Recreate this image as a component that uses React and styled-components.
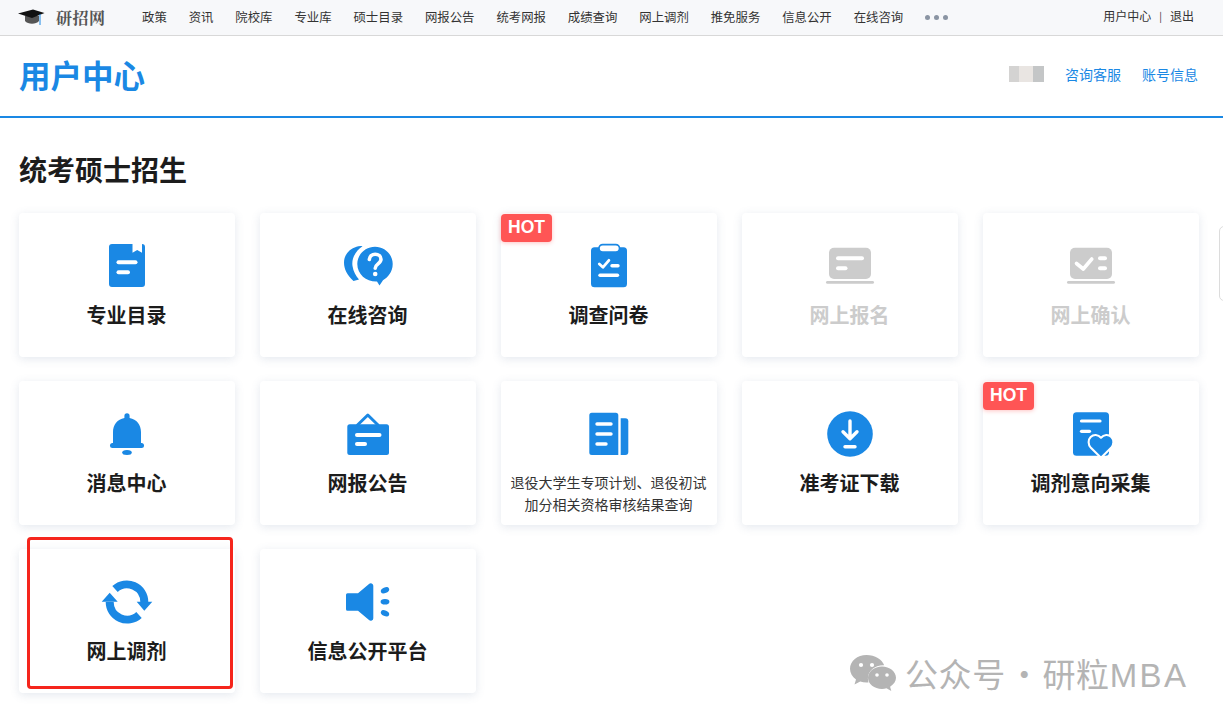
import React from 'react';
import styled, { createGlobalStyle } from 'styled-components';

const BLUE = '#1a88e4';
const GREY = '#cccccc';

const GlobalStyle = createGlobalStyle`
  html, body {
    margin: 0;
    padding: 0;
    background: #fff;
    overflow: hidden;
    font-family: "Noto Sans CJK SC", "Liberation Sans", sans-serif;
  }
  * { box-sizing: border-box; }
`;

const Page = styled.div`
  position: relative;
  width: 1223px;
  height: 724px;
  overflow: hidden;
`;

const TopBar = styled.div`
  display: flex;
  align-items: center;
  height: 36px;
  padding: 0 29px 1px 18px;
  background: #f7f8fa;
  border-bottom: 1px solid #d8d8d8;
`;

const Logo = styled.div`
  display: flex;
  align-items: center;
  gap: 11px;
  width: 124px;
  font-family: "Noto Serif CJK SC", "Noto Sans CJK SC", serif;
  font-size: 16px;
  font-weight: 700;
  color: #555;
  letter-spacing: 0.5px;
`;

const Nav = styled.nav`
  display: flex;
  align-items: center;
  gap: 21.9px;
  flex: 1;
`;

const NavItem = styled.a`
  font-size: 12.4px;
  line-height: 18px;
  color: #333;
  white-space: nowrap;
`;

const More = styled.span`
  display: flex;
  gap: 4px;

  i {
    width: 5px;
    height: 5px;
    border-radius: 50%;
    background: #8a94a3;
  }
`;

const UserLinks = styled.div`
  display: flex;
  align-items: center;
  font-size: 12px;
  line-height: 18px;
  color: #333;
  margin-top: -2px;

  span {
    margin: 0 8px;
    font-size: 10px;
  }
`;

const Header = styled.header`
  display: flex;
  align-items: center;
  justify-content: space-between;
  height: 82px;
  padding: 0 25px 4px 19px;
  border-bottom: 2px solid ${BLUE};
`;

const BrandTitle = styled.h1`
  margin: 0;
  font-size: 31.5px;
  line-height: 40px;
  font-weight: 700;
  color: ${BLUE};
`;

const HeaderLinks = styled.div`
  display: flex;
  align-items: center;
  gap: 21px;
  font-size: 14px;
  color: ${BLUE};
`;

const BlurName = styled.div`
  width: 35px;
  height: 16px;
  filter: blur(0.6px);
  background: linear-gradient(90deg, #d4d3d2 0 30%, #e9e5e2 30% 68%, #c4c6c7 68% 100%);
`;

const Main = styled.main`
  padding: 31px 0 0 19px;
`;

const SectionTitle = styled.h2`
  margin: 0 0 24px;
  font-size: 28px;
  line-height: 40px;
  font-weight: 700;
  color: #1c1c1c;
`;

const CardGrid = styled.div`
  display: grid;
  grid-template-columns: repeat(5, 216px);
  grid-auto-rows: 144px;
  column-gap: 25px;
  row-gap: 24px;
`;

const Card = styled.div`
  position: relative;
  display: flex;
  flex-direction: column;
  align-items: center;
  padding-top: 29px;
  background: #fff;
  border-radius: 4px;
  box-shadow: 0 2px 10px rgba(90, 110, 150, 0.16);
`;

const IconBox = styled.svg`
  display: block;
  width: 48px;
  height: 48px;
  overflow: visible;
  flex: none;
`;

const CardTitle = styled.div`
  margin: 11px 1px 0 0;
  font-size: 20px;
  line-height: 28px;
  font-weight: 700;
  color: ${(p) => (p.$disabled ? GREY : '#1c1c1c')};
`;

const CardNote = styled.div`
  margin: 13px 1px 0 0;
  font-size: 14px;
  line-height: 22px;
  color: #333;
  text-align: center;
`;

const HotBadge = styled.div`
  position: absolute;
  top: 1px;
  left: 0;
  width: 51px;
  height: 28px;
  border-radius: 4px;
  background: #ff5555;
  box-shadow: 0 1px 4px rgba(255, 85, 85, 0.35);
  color: #fff;
  font-family: "Liberation Sans", sans-serif;
  font-size: 17.5px;
  font-weight: 700;
  line-height: 27px;
  text-align: center;
`;

const RedMark = styled.div`
  position: absolute;
  left: 27px;
  top: 537px;
  width: 206px;
  height: 152px;
  border: 3px solid #f5251c;
  border-radius: 4px;
`;

const SideTab = styled.div`
  position: absolute;
  right: -4px;
  top: 226px;
  width: 8px;
  height: 75px;
  background: #fff;
  border: 1px solid #dcdcdc;
  border-radius: 5px 0 0 5px;
`;

const Watermark = styled.div`
  position: absolute;
  left: 850px;
  top: 653px;
  display: flex;
  align-items: center;
  gap: 9px;
  height: 42px;
  color: #b4b4b4;
  font-size: 33px;
  white-space: nowrap;

  span {
    margin-top: -3px;
    letter-spacing: 0.6px;
  }

  b {
    font-weight: 400;
    margin: 0 1px 0 2px;
  }

  em {
    font-family: "Liberation Sans", sans-serif;
    font-style: normal;
    letter-spacing: 2.4px;
  }
`;

const WhiteLine = ({ x1, x2, y, w = 4 }) => (
  <line x1={x1} x2={x2} y1={y} y2={y} stroke="#fff" strokeWidth={w} strokeLinecap="round" />
);

const BookIcon = () => (
  <IconBox viewBox="0 0 48 48">
    <path fill={BLUE} d="M9 2h20.500v8.700l4.700-2.700 4.800 2.700V2h0a3 3 0 0 1 3 3v37a3 3 0 0 1-3 3H9a3 3 0 0 1-3-3V5a3 3 0 0 1 3-3z" />
    <WhiteLine x1={15.5} x2={32.5} y={20.3} />
    <WhiteLine x1={15.5} x2={25} y={30.3} />
  </IconBox>
);

const ChatIcon = () => (
  <IconBox viewBox="0 0 48 48">
    <path fill={BLUE} d="M31 4.700c9.800 0 17.700 7.800 17.700 17.300 0 8-5 13.500-9.700 16.200L35.500 43.500 33 39.600C22.500 40 13.300 32.500 13.300 22 13.300 12.500 21.200 4.700 31 4.700z" />
    <path fill={BLUE} d="M12.500 4.700c1.500-.5 3.500-.7 6-.5C12 8.500 7.300 16 8.500 24c.8 5.500 3.500 10 6.500 13.500L9.500 39C3 33 0 27 0 20.500 0 13 5 7 12.500 4.700z" />
    <path fill="none" stroke="#fff" strokeWidth="3.600" strokeLinecap="round" d="M25.300 17.500c.3-3.300 2.800-5.200 5.900-5.200 3.300 0 5.800 2.100 5.800 5 0 4.600-5.800 4.600-5.800 9" />
    <circle cx="31.200" cy="32" r="2.300" fill="#fff" />
  </IconBox>
);

const ClipboardIcon = () => (
  <IconBox viewBox="0 0 48 48">
    <rect x="6" y="5.300" width="36" height="40" rx="3.500" fill={BLUE} />
    <rect x="14" y="2.600" width="20.500" height="7.400" rx="3.700" fill="#fff" stroke={BLUE} strokeWidth="1.600" />
    <path fill="none" stroke="#fff" strokeWidth="2.800" strokeLinecap="round" strokeLinejoin="round" d="M14.300 22l3.600 3.300 6-7" />
    <WhiteLine x1={27} x2={33} y={23.700} w={3.400} />
    <WhiteLine x1={15} x2={32.500} y={33.300} w={3.400} />
  </IconBox>
);

const FormIcon = () => (
  <IconBox viewBox="0 0 48 48">
    <rect x="3" y="5.700" width="42" height="31.300" rx="5" fill={GREY} />
    <rect x="0" y="39" width="48" height="2.800" rx="1.400" fill={GREY} />
    <WhiteLine x1={12} x2={36} y={16.300} />
    <WhiteLine x1={12} x2={19.500} y={26.300} />
  </IconBox>
);

const ConfirmIcon = () => (
  <IconBox viewBox="0 0 48 48">
    <rect x="3" y="5.700" width="42" height="31.300" rx="5" fill={GREY} />
    <rect x="0" y="39" width="48" height="2.800" rx="1.400" fill={GREY} />
    <path fill="none" stroke="#fff" strokeWidth="3.600" strokeLinecap="round" strokeLinejoin="round" d="M9.500 21.500l6.800 5.500 8.500-10" />
    <WhiteLine x1={33} x2={38} y={16.300} />
    <WhiteLine x1={33} x2={38} y={26.300} />
  </IconBox>
);

const BellIcon = () => (
  <IconBox viewBox="0 0 48 48">
    <path fill={BLUE} d="M24 3.300a2.600 2.600 0 0 1 2.600 2.600v2c7 1.200 11.400 7 11.400 14.100v11.300h-28V22c0-7.100 4.400-12.900 11.400-14.100v-2A2.600 2.600 0 0 1 24 3.300z" />
    <rect x="7" y="33" width="34" height="5" rx="2.500" fill={BLUE} />
    <ellipse cx="24" cy="42.600" rx="4.800" ry="2.500" fill={BLUE} />
  </IconBox>
);

const BoardIcon = () => (
  <IconBox viewBox="0 0 48 48">
    <rect x="3.300" y="14.300" width="41.700" height="30.700" rx="2.500" fill={BLUE} />
    <path fill="none" stroke={BLUE} strokeWidth="3" strokeLinejoin="round" d="M13 15.500L23.800 5l10.700 10.500" />
    <WhiteLine x1={13} x2={35.500} y={25} />
    <WhiteLine x1={13} x2={21} y={34} />
  </IconBox>
);

const NewsIcon = () => (
  <IconBox viewBox="0 0 48 48">
    <path fill={BLUE} d="M6.800 2.700h24a2.500 2.500 0 0 1 2.500 2.500V45H6.800a2.500 2.500 0 0 1-2.500-2.500V5.200a2.500 2.500 0 0 1 2.500-2.500z" />
    <path fill={BLUE} d="M35.700 8.300h4.600a3 3 0 0 1 3 3V42a3 3 0 0 1-3 3h-4.600z" />
    <WhiteLine x1={12} x2={26} y={14} w={3.400} />
    <WhiteLine x1={12} x2={26} y={24} w={3.400} />
    <WhiteLine x1={12} x2={21} y={34} w={3.400} />
  </IconBox>
);

const DownloadIcon = () => (
  <IconBox viewBox="0 0 48 48">
    <circle cx="24" cy="24" r="22.800" fill={BLUE} />
    <path fill="none" stroke="#fff" strokeWidth="3.400" strokeLinecap="round" strokeLinejoin="round" d="M24 11v17M17 21.800l7 7 7-7" />
    <WhiteLine x1={19} x2={29} y={36.700} w={3.400} />
  </IconBox>
);

const HeartDocIcon = () => (
  <IconBox viewBox="0 0 48 48">
    <rect x="6" y="2.300" width="36" height="43.400" rx="3.500" fill={BLUE} />
    <WhiteLine x1={14.500} x2={33} y={11} w={3.200} />
    <WhiteLine x1={14.500} x2={22.500} y={21.300} w={3.200} />
    <path fill={BLUE} stroke="#fff" strokeWidth="1.800" strokeLinejoin="round" transform="translate(-5.100 -6.200) scale(1.150)" d="M34 47l-8.800-8.700c-2.600-2.800-2.600-7-.2-9.400 2.600-2.600 6.500-2.300 9 .6 2.500-2.900 6.400-3.200 9-.6 2.400 2.400 2.400 6.600-.2 9.400z" />
  </IconBox>
);

const RefreshIcon = () => (
  <IconBox viewBox="0 0 48 48">
    <g fill="none" stroke={BLUE} strokeWidth="8">
      <path d="M12 11A17.500 17.500 0 0 1 41.300 24" />
      <path d="M36 37A17.500 17.500 0 0 1 6.700 24" />
    </g>
    <path fill={BLUE} d="M33.700 23.700h15.600l-8 9zM-1.300 23.700h16l-8-9z" />
  </IconBox>
);

const SpeakerIcon = () => (
  <IconBox viewBox="0 0 48 48">
    <path fill={BLUE} d="M3.500 15.300h10.500L25 6a2.500 2.500 0 0 1 4.300 1.800v32.400A2.500 2.500 0 0 1 25 42L14 32.700H3.500A1.500 1.500 0 0 1 2 31.200V16.800a1.500 1.500 0 0 1 1.500-1.500z" />
    <ellipse cx="41" cy="12.300" rx="4.400" ry="2.800" fill={BLUE} transform="rotate(-25 41 12.300)" />
    <ellipse cx="41" cy="23.700" rx="4.400" ry="2.800" fill={BLUE} />
    <ellipse cx="41" cy="35.300" rx="4.400" ry="2.800" fill={BLUE} transform="rotate(25 41 35.300)" />
  </IconBox>
);

const CapLogo = () => (
  <svg width="27" height="16" viewBox="0 0 27 16">
    <path fill="#555" d="M7 7h14v5c-3 3.500-11 3.500-14 0z" />
    <path fill="#111" d="M0 4.500L15 .5l11.500 3.500L14 9z" />
    <rect x="21.500" y="5" width="1" height="11" fill={BLUE} />
  </svg>
);

const WechatMark = () => (
  <svg width="46" height="38" viewBox="0 0 46 38">
    <path fill="#b4b4b4" d="M16.500 0C7.400 0 0 6.200 0 13.800c0 4.300 2.300 8 6 10.600L4.500 29.500l5.700-3c2 .7 4 1 6.300 1 .7 0 1.400 0 2-.1-.4-1.400-.6-2.700-.6-4.100 0-7.200 6.800-13 15.300-13 .3 0 .7 0 1 0C32.300 4.400 25 0 16.500 0z" />
    <path fill="#b4b4b4" d="M32 11.500c-7.700 0-14 5-14 11.300S24.300 34 32 34c1.600 0 3.100-.2 4.500-.7l4.800 2.700-1.200-4.300c3.600-2.100 5.900-5.500 5.900-8.900 0-6.300-6.300-11.300-14-11.300z" />
    <circle cx="11" cy="10" r="2.100" fill="#fff" />
    <circle cx="22" cy="10" r="2.100" fill="#fff" />
    <circle cx="27" cy="20" r="1.800" fill="#fff" />
    <circle cx="37" cy="20" r="1.800" fill="#fff" />
  </svg>
);

const navItems = ['政策', '资讯', '院校库', '专业库', '硕士目录', '网报公告', '统考网报', '成绩查询', '网上调剂', '推免服务', '信息公开', '在线咨询'];

const cards = [
  { title: '专业目录', Icon: BookIcon },
  { title: '在线咨询', Icon: ChatIcon },
  { title: '调查问卷', Icon: ClipboardIcon, hot: true },
  { title: '网上报名', Icon: FormIcon, disabled: true },
  { title: '网上确认', Icon: ConfirmIcon, disabled: true },
  { title: '消息中心', Icon: BellIcon },
  { title: '网报公告', Icon: BoardIcon },
  { note: ['退役大学生专项计划、退役初试', '加分相关资格审核结果查询'], Icon: NewsIcon },
  { title: '准考证下载', Icon: DownloadIcon },
  { title: '调剂意向采集', Icon: HeartDocIcon, hot: true },
  { title: '网上调剂', Icon: RefreshIcon },
  { title: '信息公开平台', Icon: SpeakerIcon },
];

export default function App() {
  return (
    <Page>
      <GlobalStyle />
      <TopBar>
        <Logo><CapLogo />研招网</Logo>
        <Nav>
          {navItems.map((item) => <NavItem key={item}>{item}</NavItem>)}
          <More><i /><i /><i /></More>
        </Nav>
        <UserLinks>用户中心<span>|</span>退出</UserLinks>
      </TopBar>
      <Header>
        <BrandTitle>用户中心</BrandTitle>
        <HeaderLinks>
          <BlurName />
          <a>咨询客服</a>
          <a>账号信息</a>
        </HeaderLinks>
      </Header>
      <Main>
        <SectionTitle>统考硕士招生</SectionTitle>
        <CardGrid>
          {cards.map(({ title, note, Icon, hot, disabled }) => (
            <Card key={title || note[0]}>
              {hot && <HotBadge>HOT</HotBadge>}
              <Icon />
              {title && <CardTitle $disabled={disabled}>{title}</CardTitle>}
              {note && <CardNote>{note[0]}<br />{note[1]}</CardNote>}
            </Card>
          ))}
        </CardGrid>
      </Main>
      <RedMark />
      <SideTab />
      <Watermark>
        <WechatMark />
        <span>公众号<b>·</b>研粒<em>MBA</em></span>
      </Watermark>
    </Page>
  );
}
